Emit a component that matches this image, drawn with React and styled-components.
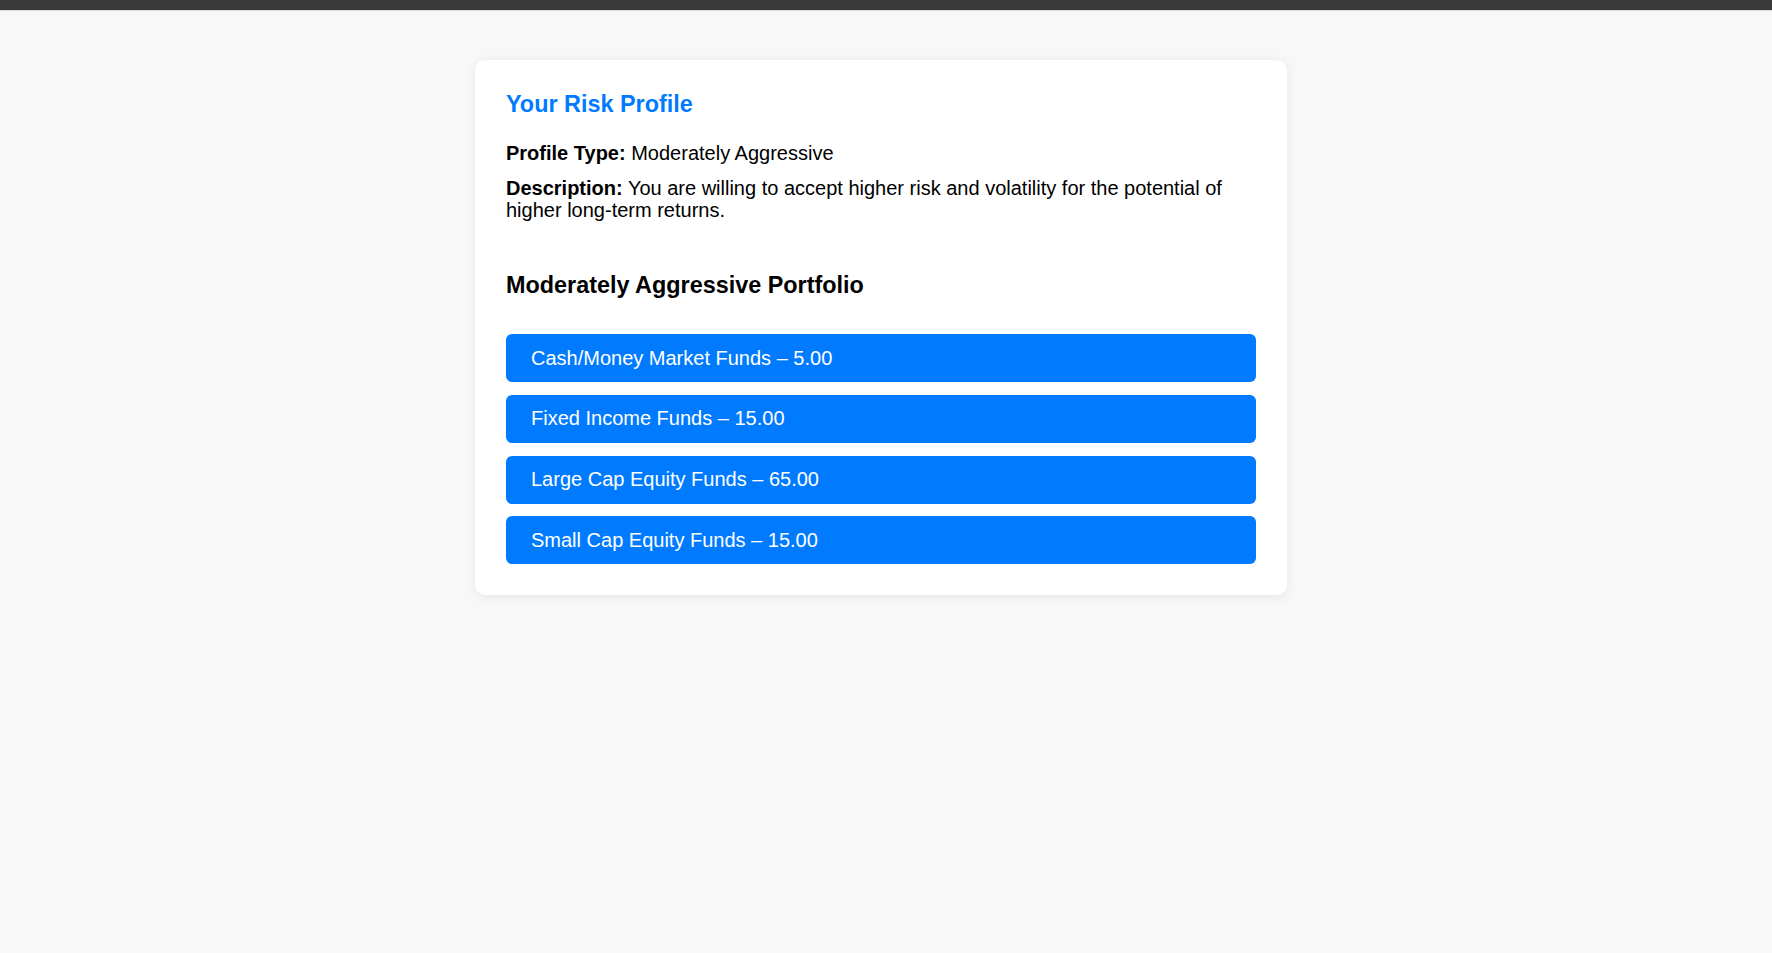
import React from "react";
import styled, { createGlobalStyle } from "styled-components";

const GlobalStyle = createGlobalStyle`
  html, body {
    margin: 0;
    padding: 0;
    background: #f8f8f8;
    font-family: "Liberation Sans", Arial, sans-serif;
    color: #000;
  }
`;

const TopBar = styled.div`
  height: 10px;
  background: #3a3a3a;
  border-bottom: 1px solid #dcdcdc;
`;

const Page = styled.div`
  display: flex;
  justify-content: center;
  padding: 49px 10px 40px 0;
  min-height: 942px;
  box-sizing: border-box;
`;

const Card = styled.div`
  width: 750px;
  padding: 31px 31px 31px;
  background: #fff;
  border-radius: 10px;
  box-shadow: 0 2px 12px rgba(0, 0, 0, 0.08);
  align-self: flex-start;
`;

const Title = styled.h2`
  margin: 0 0 23.5px;
  font-size: 23.4px;
  font-weight: bold;
  color: #007bff;
`;

const Line = styled.p`
  margin: 0 0 ${({ $gap }) => $gap || 0}px;
  font-size: 20px;
  line-height: 22.5px;
`;

const SectionTitle = styled.h3`
  margin: 50.5px 0 35px;
  font-size: 23.4px;
  font-weight: bold;
`;

const AllocationList = styled.div`
  display: flex;
  flex-direction: column;
  gap: 12.75px;
`;

const AllocationItem = styled.div`
  background: #007bff;
  color: #fff;
  border-radius: 6px;
  padding: 12.5px 25px;
  font-size: 20px;
  line-height: 23px;
`;

const allocations = [
  { name: "Cash/Money Market Funds", value: "5.00" },
  { name: "Fixed Income Funds", value: "15.00" },
  { name: "Large Cap Equity Funds", value: "65.00" },
  { name: "Small Cap Equity Funds", value: "15.00" },
];

const App = () => {
  return (
    <>
      <GlobalStyle />
      <TopBar />
      <Page>
        <Card>
          <Title>Your Risk Profile</Title>
          <Line $gap={12.5}>
            <strong>Profile Type:</strong> Moderately Aggressive
          </Line>
          <Line>
            <strong>Description:</strong> You are willing to accept higher
            risk and volatility for the potential of higher long-term returns.
          </Line>
          <SectionTitle>Moderately Aggressive Portfolio</SectionTitle>
          <AllocationList>
            {allocations.map((a) => (
              <AllocationItem key={a.name}>
                {a.name} – {a.value}
              </AllocationItem>
            ))}
          </AllocationList>
        </Card>
      </Page>
    </>
  );
};

export default App;
